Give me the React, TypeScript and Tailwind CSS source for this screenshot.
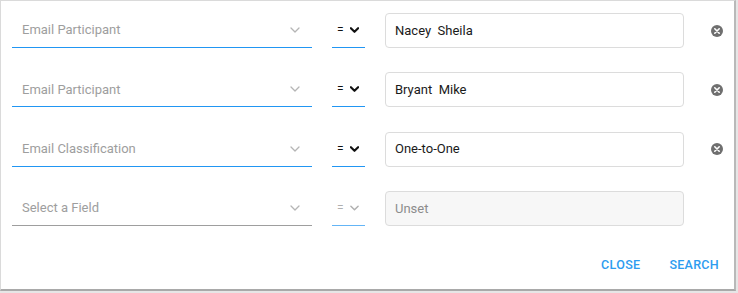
const rows = [
  { field: "Email Participant", value: "Nacey  Sheila", active: true },
  { field: "Email Participant", value: "Bryant  Mike", active: true },
  { field: "Email Classification", value: "One-to-One", active: true },
  { field: "Select a Field", value: "Unset", active: false },
];

function Chevron({ className }: { className: string }) {
  return (
    <svg viewBox="0 0 10 6" className={className} fill="none" stroke="currentColor" strokeLinecap="round" strokeLinejoin="round">
      <path d="M1 1l4 4 4-4" />
    </svg>
  );
}

function ClearIcon() {
  return (
    <svg viewBox="0 0 12 12" className="h-[12px] w-[12px]">
      <circle cx="6" cy="6" r="6" fill="#6f6f6f" />
      <path d="M3.8 3.8l4.4 4.4M8.2 3.8l-4.4 4.4" stroke="#fff" strokeWidth="1.6" strokeLinecap="round" />
    </svg>
  );
}

export default function App() {
  return (
    <div className="h-[293px] w-[738px] bg-[#e6e6e6] font-['Roboto',sans-serif]">
      <div className="flex h-[291px] w-[736px] flex-col border-b-2 border-l border-r-2 border-t border-b-[#a9a9a9] border-l-[#dadada] border-r-[#b9b9b9] border-t-[#dadada] bg-white pl-[11px] pt-[12px]">
        <div className="flex flex-col gap-[24.3px]">
          {rows.map((r, i) => (
            <div key={i} className="flex h-[35px] items-stretch">
              {/* field select */}
              <div
                className={`flex w-[300px] items-center justify-between border-b pl-[10px] pr-[12px] ${
                  r.active ? "border-[#2196f3]" : "border-[#9e9e9e]"
                }`}
              >
                <span className="text-[13px] text-[#9e9e9e]">{r.field}</span>
                <Chevron className="h-[6px] w-[10px] stroke-[1.3] text-[#b5b5b5]" />
              </div>

              {/* operator */}
              <div
                className={`ml-[20px] flex w-[33px] items-center gap-[6px] border-b pl-[5px] ${
                  r.active ? "border-[#2196f3] text-[#111]" : "border-[#64b5f6] text-[#b0b0b0]"
                }`}
              >
                <span className="text-[12px] leading-none">=</span>
                <Chevron className={`h-[6px] w-[9px] ${r.active ? "stroke-[2.4]" : "stroke-[1.6]"}`} />
              </div>

              {/* value input */}
              <div
                className={`ml-[20px] flex w-[299px] items-center whitespace-pre rounded-[4px] border border-[#dcdcdc] pl-[9px] text-[13px] ${
                  r.active ? "bg-white text-[#1a1a1a]" : "bg-[#f7f7f7] text-[#8c8c8c]"
                }`}
              >
                {r.value}
              </div>

              <div className="ml-[27px] flex items-center">
                {r.active && <ClearIcon />}
              </div>
            </div>
          ))}
        </div>

        <div className="mt-[30px] flex justify-end gap-[29px] pr-[15px] text-[12.5px] font-medium tracking-[0.3px] text-[#2d9cf0]">
          <button>CLOSE</button>
          <button>SEARCH</button>
        </div>
      </div>
    </div>
  );
}
